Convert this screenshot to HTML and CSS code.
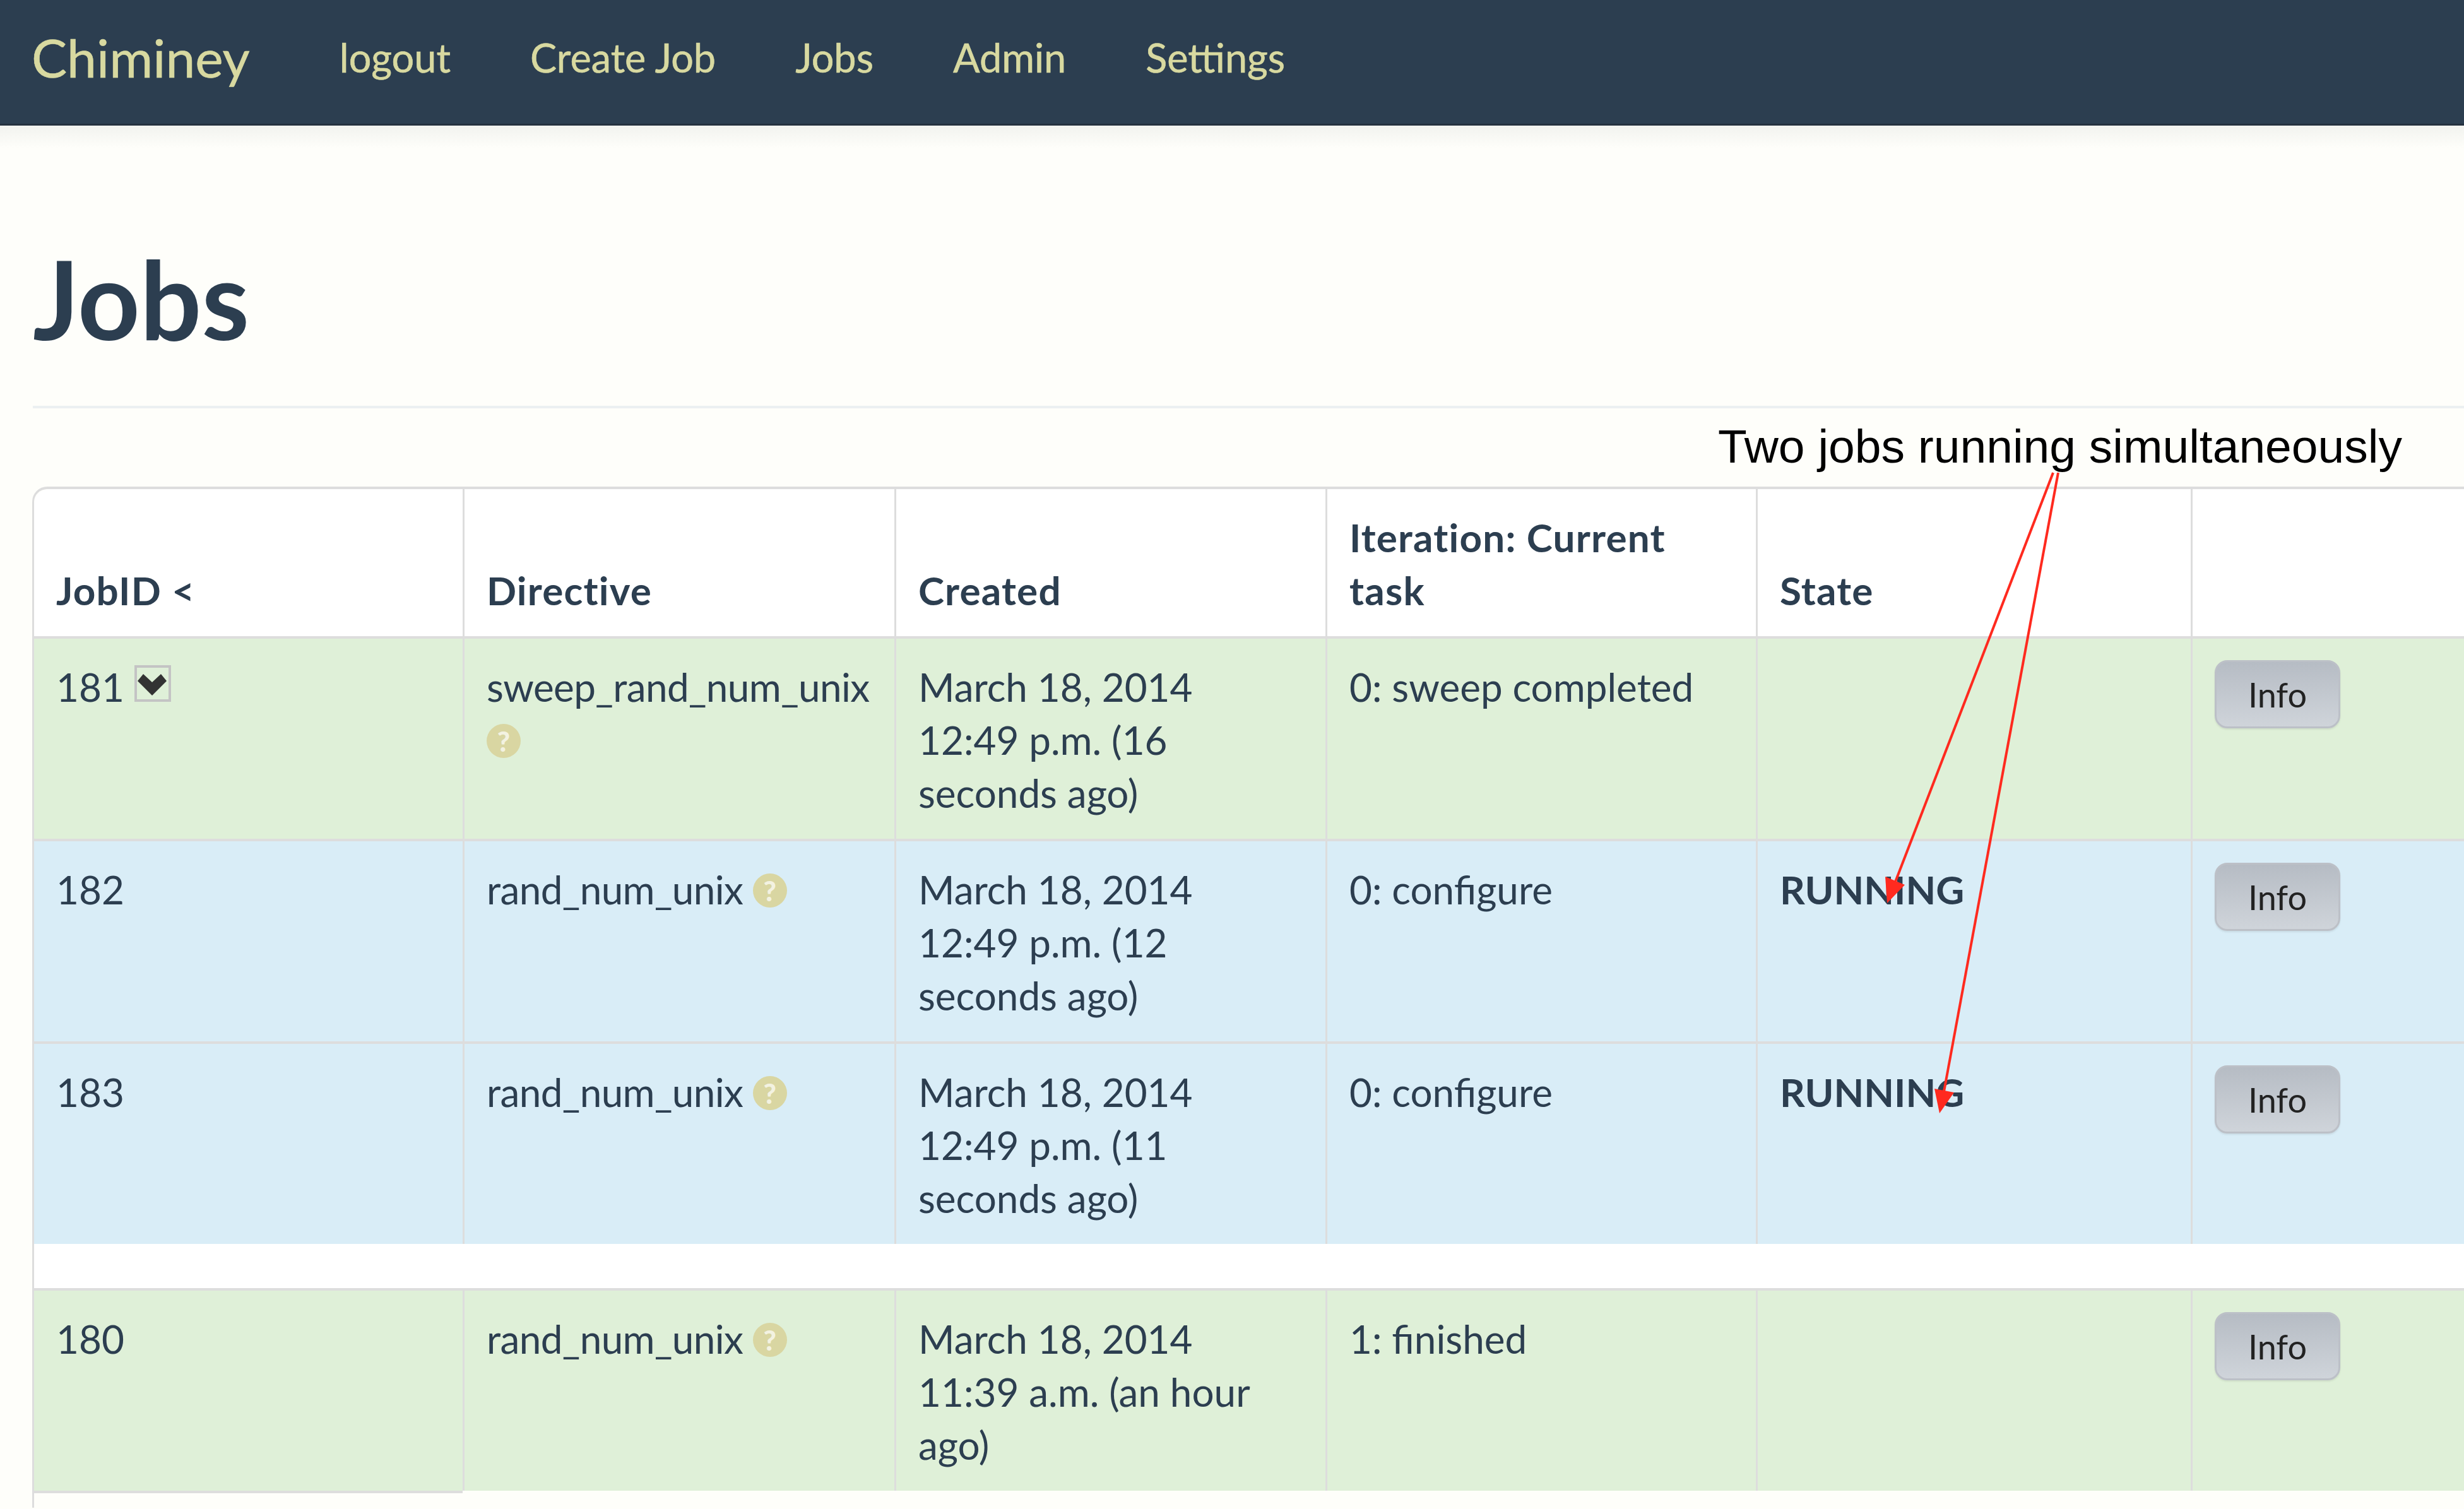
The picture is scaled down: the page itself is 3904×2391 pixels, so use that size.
FILE: index.html
```html
<!DOCTYPE html>
<html lang="en">
<head>
    <meta charset="UTF-8">
    <title>Chiminey - Jobs</title>
    <link rel="stylesheet" href="styles.css">
</head>
<body>
    <!-- Top navigation -->
    <nav class="navbar">
        <a class="brand" href="#">Chiminey</a>
        <a class="nav-link" href="#">logout</a>
        <a class="nav-link" href="#">Create Job</a>
        <a class="nav-link" href="#">Jobs</a>
        <a class="nav-link" href="#">Admin</a>
        <a class="nav-link" href="#">Settings</a>
    </nav>

    <main class="content">
        <div class="page-header">
            <h1>Jobs</h1>
        </div>

        <table class="jobs">
            <colgroup>
                <col class="col-id">
                <col class="col-directive">
                <col class="col-created">
                <col class="col-task">
                <col class="col-state">
                <col class="col-action">
            </colgroup>
            <thead>
                <tr>
                    <th class="first-head">JobID &lt;</th>
                    <th>Directive</th>
                    <th>Created</th>
                    <th>Iteration: Current task</th>
                    <th>State</th>
                    <th></th>
                </tr>
            </thead>
            <tbody>
                <tr class="row-success">
                    <td>181 <button class="toggle"><svg viewBox="0 0 46 34" width="46" height="34"><path d="M0 11 L9 0 L23 13 L37 0 L46 11 L23 34 Z" fill="#333"/></svg></button></td>
                    <td class="directive">sweep_rand_num_unix <span class="help">?</span></td>
                    <td class="created">March 18, 2014 12:49 p.m. (16 seconds ago)</td>
                    <td>0: sweep completed</td>
                    <td></td>
                    <td><button class="btn">Info</button></td>
                </tr>
                <tr class="row-info">
                    <td>182</td>
                    <td class="directive">rand_num_unix <span class="help">?</span></td>
                    <td class="created">March 18, 2014 12:49 p.m. (12 seconds ago)</td>
                    <td>0: configure</td>
                    <td><strong>RUNNING</strong></td>
                    <td><button class="btn">Info</button></td>
                </tr>
                <tr class="row-info row-end">
                    <td>183</td>
                    <td class="directive">rand_num_unix <span class="help">?</span></td>
                    <td class="created">March 18, 2014 12:49 p.m. (11 seconds ago)</td>
                    <td>0: configure</td>
                    <td><strong>RUNNING</strong></td>
                    <td><button class="btn">Info</button></td>
                </tr>
            </tbody>
            <tbody>
                <tr class="spacer"><td colspan="6"></td></tr>
                <tr class="row-success row-end">
                    <td>180</td>
                    <td class="directive">rand_num_unix <span class="help">?</span></td>
                    <td class="created">March 18, 2014 11:39 a.m. (an hour ago)</td>
                    <td>1: finished</td>
                    <td></td>
                    <td><button class="btn">Info</button></td>
                </tr>
                <tr class="tail"><td colspan="6"></td></tr>
            </tbody>
        </table>
    </main>

    <!-- Annotation drawn over the screenshot -->
    <div class="note">Two jobs running simultaneously</div>
    <svg class="arrows" width="3904" height="2391" viewBox="0 0 3904 2391">
        <line x1="3253" y1="749" x2="3000" y2="1405" stroke="#ff2a1f" stroke-width="4"/>
        <polygon points="2990,1431 2987,1389 3018,1402" fill="#ff2a1f"/>
        <line x1="3261" y1="749" x2="3079" y2="1735" stroke="#ff2a1f" stroke-width="4"/>
        <polygon points="3073,1764 3065,1725 3096,1731" fill="#ff2a1f"/>
    </svg>
</body>
</html>
```

FILE: styles.css
```css
/* General */
html, body {
    margin: 0;
    height: 100%;
    overflow: hidden;
}

body {
    position: relative;
    background-color: #fefefa;
    color: #2c3e50;
    font-family: Lato, "Open Sans", sans-serif;
    font-size: 62px;
    line-height: 84px;
}

/* Navbar */
.navbar {
    display: flex;
    align-items: center;
    height: 199px;
    padding: 0 50px 14px;
    box-sizing: border-box;
    background-color: #2c3e50;
    border-bottom: 3px solid #25313f;
    box-shadow: 0 2px 0 #a0a8ad;
}

.navbar a {
    color: #d8d9a0;
    text-decoration: none;
    -webkit-text-stroke: 0.6px #d8d9a0;
}

.brand {
    font-size: 84px;
    margin-right: 142px;
}

.nav-link {
    margin-right: 126px;
    font-size: 63px;
}

/* Page header */
.content {
    padding-left: 51px;
    background: linear-gradient(#f2f3ef, #fefefa) no-repeat top / 100% 36px;
}

.page-header {
    border-bottom: 4px solid #ecf0f1;
    padding-bottom: 80px;
    margin-left: 1px;
    padding-top: 184px;
}

h1 {
    margin: 0;
    font-size: 172px;
    line-height: 180px;
    font-weight: 700;
    color: #2c3e50;
}

/* Jobs table */
.jobs {
    table-layout: fixed;
    width: 3946px;
    margin-top: 124px;
    border-collapse: separate;
    border-spacing: 0;
    border-top: 4px solid #ddd;
    border-left: 3px solid #ddd;
    border-top-left-radius: 24px;
}

.col-id { width: 679px; }
.col-directive { width: 684px; }
.col-created { width: 683px; }
.col-task { width: 682px; }
.col-state { width: 689px; }
.col-action { width: 529px; }

.jobs th,
.jobs td {
    padding: 34px 35px 31px;
    text-align: left;
    vertical-align: top;
    border-top: 4px solid #ddd;
    border-left: 3px solid #ddd;
}

.jobs th {
    vertical-align: bottom;
    background-color: #fff;
    border-top: 0;
    font-weight: 700;
    letter-spacing: 1.2px;
}

.jobs th:first-child,
.jobs td:first-child {
    border-left: 0;
}

.first-head {
    border-top-left-radius: 24px;
}

.row-success td { background-color: #dff0d8; }
.row-info td { background-color: #d9edf7; }

.directive {
    letter-spacing: -0.6px;
}

/* keeps the date on its own line, the way the column wraps */
.jobs td.created {
    padding-right: 60px;
}

.row-end td:first-child {
    box-shadow: 0 4px 0 #ddd;
}

.row-end td {
    padding-bottom: 31px;
}

.spacer td {
    height: 70px;
    padding: 0;
    border: 0;
    background-color: #fff;
}

.tail td {
    height: 27px;
    padding: 0;
    border: 0;
}

/* Little widgets */
.toggle {
    display: inline-block;
    width: 58px;
    height: 58px;
    padding: 4px 0 0 1px;
    margin: 0;
    vertical-align: 10px;
    background: transparent;
    border: 4px solid #c4c4c4;
    box-sizing: border-box;
    line-height: 0;
    text-align: left;
}

.help {
    display: inline-block;
    width: 54px;
    height: 54px;
    border-radius: 50%;
    background-color: #d9d6a2;
    color: rgba(255, 255, 255, 0.7);
    font-size: 44px;
    font-weight: 900;
    letter-spacing: 0;
    line-height: 54px;
    text-align: center;
    vertical-align: 5px;
}

.btn {
    display: block;
    width: 199px;
    height: 108px;
    padding: 0;
    background: linear-gradient(#b6bcc4, #cfd4da);
    border: 3px solid #bcc0c7;
    border-radius: 20px;
    box-shadow: 0 2px 3px rgba(0, 0, 0, 0.08);
    color: #222;
    font-family: Lato, sans-serif;
    font-size: 54px;
}

/* Annotation */
.note {
    position: absolute;
    left: 2722px;
    top: 662px;
    font-family: "Liberation Sans", Arial, sans-serif;
    font-size: 75px;
    line-height: 90px;
    color: #000;
    white-space: nowrap;
}

.arrows {
    position: absolute;
    left: 0;
    top: 0;
    pointer-events: none;
}
```
